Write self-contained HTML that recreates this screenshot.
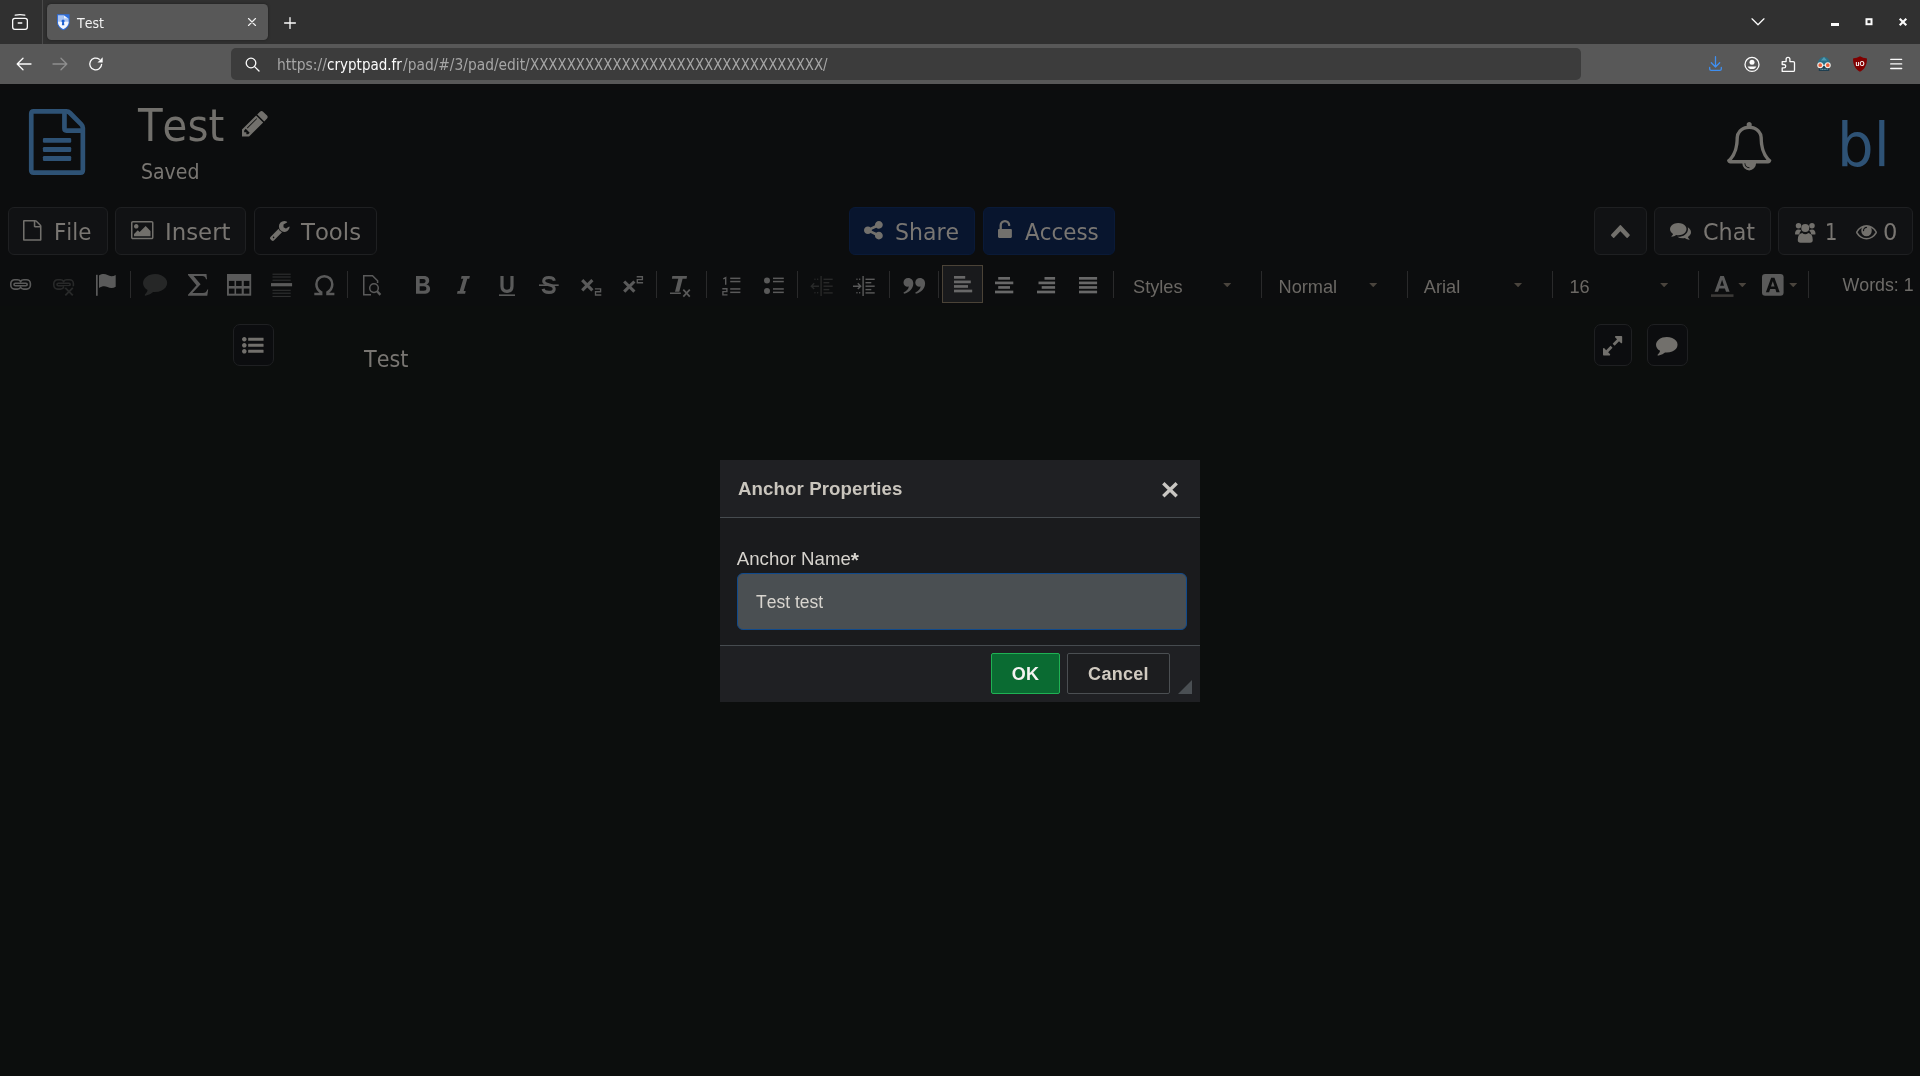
<!DOCTYPE html>
<html lang="en">
<head>
<meta charset="utf-8">
<title>Test</title>
<style>
*{box-sizing:border-box;margin:0;padding:0}
html,body{width:1920px;height:1076px;overflow:hidden;background:#0c0d0e}
body{position:relative;font-kerning:none;font-family:"DejaVu Sans Condensed","DejaVu Sans","Liberation Sans",sans-serif;color:#797672}
#root{position:absolute;left:0;top:0;width:1920px;height:1076px;will-change:transform}
.abs{position:absolute}
svg{display:block;position:absolute;overflow:visible}
/* ---------- browser chrome ---------- */
#tabstrip{left:0;top:0;width:1920px;height:44px;background:#303030}
#tabsep{left:42px;top:0;width:1px;height:44px;background:#4a4a4a}
#tab{left:47px;top:4px;width:221px;height:36px;border-radius:4.500px;background:#585858;box-shadow:0 0 3px rgba(0,0,0,.4)}
#tabtitle{left:77px;top:13px;transform-origin:0 0;transform:scaleX(.975);white-space:nowrap;font-size:14.4px;line-height:20px;color:#f4f4f4}
#navbar{left:0;top:44px;width:1920px;height:40px;background:#585858}
#navline{left:0;top:84px;width:1920px;height:1px;background:#0c0d0e}
#urlbar{left:231px;top:48px;width:1350px;height:32px;border-radius:5px;background:#3c3c3c}
#url{left:0;top:55px;font-size:15px;line-height:20px;color:#a6a6a6;white-space:nowrap}
#url b{font-weight:normal;color:#fbfbfb}
#url span,#url b{position:absolute;top:0;transform-origin:0 0}
#u1{left:276.600px;transform:scaleX(1.03)}#u2{left:327.100px}#u3{left:402.800px;transform:scaleX(1.023)}#u4{left:529.700px;transform:scaleX(.991)}
/* ---------- cryptpad header ---------- */
#title{left:137.500px;top:95.200px;transform:scaleX(1.007);font-size:44.500px;line-height:62px;color:#72706c;transform-origin:0 0;white-space:nowrap}
#saved{left:141px;top:159px;transform:scaleX(1.025);font-size:20.5px;line-height:26px;color:#797672;transform-origin:0 0;white-space:nowrap}
#avatar{left:1836.5px;top:107px;transform:scaleX(1.048);font-size:61.2px;line-height:76px;color:#2e5275;transform-origin:0 0;white-space:nowrap}
.btn{position:absolute;top:207px;height:48px;border:1px solid #1f2022;border-radius:6px;background:#111214;color:#797672;font-size:24px;line-height:46px;white-space:nowrap}
.btn.dk{background:#0d0e10}
.bt{position:absolute;top:217px;font-size:23.5px;line-height:30px;color:#797672;white-space:nowrap;transform-origin:0 0}
.btn.blue{background:#08152e;border-color:#0a1a38}
/* ---------- ck toolbar ---------- */
.sep{position:absolute;top:271px;width:1px;height:27px;background:#2a2a2b}
.combo{position:absolute;top:274.700px;font-family:"Liberation Sans",sans-serif;font-size:18.200px;line-height:24px;color:#6b6864;white-space:nowrap}
.caret{position:absolute;top:282.900px;width:8.100px;height:4.300px;background:#4a443d;clip-path:polygon(0 0,100% 0,50% 100%)}
#words{left:1842.500px;top:273px;font-family:"Liberation Sans",sans-serif;font-size:17.800px;line-height:24px;color:#6e6c69;white-space:nowrap}
#alignbox{left:942px;top:265px;width:41px;height:38px;background:#191a1c;border:1px solid #4b4337}
.sbtn{position:absolute;width:41px;height:42px;border:1px solid #1f2022;border-radius:7px;background:#0c0d0f}
#doctext{left:364px;top:344px;transform:scaleX(.98);font-size:23.5px;line-height:30px;color:#797672;transform-origin:0 0;white-space:nowrap}
/* ---------- dialog ---------- */
#dlg{left:720px;top:460px;width:480px;height:242px;background:#1f2023}
#dlgbody{left:0;top:57px;width:480px;height:129px;background:#1a1b1d}
#dlgtitle{left:18px;top:17px;letter-spacing:.1px;font-family:"Liberation Sans",sans-serif;font-weight:bold;font-size:18.67px;line-height:24px;color:#c9c5bd;white-space:nowrap}
#dlghr1{left:0;top:56.800px;width:480px;height:1.300px;background:#464b4f}
#dlghr2{left:0;top:185px;width:480px;height:1.300px;background:#464b4f}
#dlglabel{left:16.800px;top:87px;font-family:"Liberation Sans",sans-serif;font-size:18.67px;line-height:24px;color:#d6d3cd;white-space:nowrap}
#dlginput{left:17px;top:113px;width:450px;height:57px;border:1.330px solid #104a8c;border-radius:6px;background:#4a4f52}
#dlginputtext{left:36px;top:130px;font-family:"Liberation Sans",sans-serif;font-size:17.500px;line-height:24px;color:#d8d5cf;white-space:nowrap}
#ok{left:271px;top:193px;width:69px;height:41px;border:1px solid #1fb254;border-radius:2px;background:#0a6b32;color:#f4f4f2;font-family:"Liberation Sans",sans-serif;font-weight:bold;font-size:18px;line-height:40px;text-align:center;letter-spacing:.3px}
#cancel{left:347px;top:193px;width:103px;height:41px;border:1px solid #4b4f52;border-radius:2px;background:#1c1d1f;color:#d0cac0;font-family:"Liberation Sans",sans-serif;font-weight:bold;font-size:18px;line-height:40px;text-align:center;letter-spacing:.3px}
#resize{left:458px;top:220px;width:0;height:0;border-left:14px solid transparent;border-bottom:14px solid #4a4f53}
#dlglabel b{font-size:21px;line-height:10px;position:relative;top:1.500px}
</style>
</head>
<body>
<div id="root">
<!-- browser chrome -->
<div id="tabstrip" class="abs"></div>
<div id="tabsep" class="abs"></div>
<div id="tab" class="abs"></div>
<div id="tabtitle" class="abs">Test</div>
<div id="navbar" class="abs"></div>
<div id="navline" class="abs"></div>
<div id="urlbar" class="abs"></div>
<div id="url" class="abs"><span id="u1">https://</span><b id="u2">cryptpad.fr</b><span id="u3">/pad/#/3/pad/edit/</span><span id="u4">XXXXXXXXXXXXXXXXXXXXXXXXXXXXXXXX/</span></div>


<!-- chrome icons -->
<svg style="left:12px;top:14px" width="16" height="16" viewBox="0 0 16 16" fill="none" stroke="#fbfbfb" stroke-width="1.3" stroke-linecap="round"><path d="M3.2 1.1 Q8 0.2 12.8 1.1"/><rect x=".65" y="4.3" width="14.7" height="11" rx="2.2"/><path d="M6.2 9h3.6"/></svg>
<svg style="left:55.700px;top:13px" width="14.600" height="17.800" viewBox="0 0 14 17" preserveAspectRatio="none"><path d="M1 1.2h12v7.3c0 3.6-2.6 6.4-6 8-3.400-1.600-6-4.400-6-8z" fill="#2f6fdc"/><path d="M1.900 2.100h5.600v3.400h4.600v3c0 3-2.100 5.400-5.100 6.800-3-1.400-5.100-3.800-5.100-6.800z" fill="#a9c4f3"/><path d="M7.500 2.100l4.600 3.400h-4.600z" fill="#e9f0fc"/><path d="M1.900 8.300h10.200c0 3.200-2.100 5.600-5.100 7-3-1.400-5.100-3.800-5.100-7z" fill="#f4f7fd"/><circle cx="6.800" cy="7.600" r="1.500" fill="#1c5fd0"/><path d="M6.100 8h1.400l.5 3.600h-2.400z" fill="#1c5fd0"/></svg>
<svg style="left:248px;top:18px" width="8" height="8" viewBox="0 0 8 8" fill="none" stroke="#f0f0f0" stroke-width="1.150" stroke-linecap="round"><path d="M.5.500l7 7M7.500.500l-7 7"/></svg>
<svg style="left:283.500px;top:16.500px" width="12" height="12" viewBox="0 0 12 12" fill="none" stroke="#fbfbfb" stroke-width="1.300" stroke-linecap="round"><path d="M6 .600v10.800M.600 6h10.800"/></svg>
<svg style="left:1751px;top:18px" width="14" height="8" viewBox="0 0 14 8" fill="none" stroke="#fbfbfb" stroke-width="1.250" stroke-linecap="round" stroke-linejoin="round"><path d="M1 .800l6 6 6-6"/></svg>
<div class="abs" style="left:1831px;top:23px;width:8px;height:3px;background:#fbfbfb"></div>
<svg style="left:1865px;top:18px" width="8" height="8" viewBox="0 0 8 8"><rect x="1.500" y="1.200" width="5" height="5" fill="none" stroke="#fbfbfb" stroke-width="2"/></svg>
<svg style="left:1899px;top:18px" width="8" height="8" viewBox="0 0 8 8" fill="none" stroke="#fbfbfb" stroke-width="2.100"><path d="M.700.700l6.600 6.600M7.300.700l-6.600 6.600"/></svg>
<!-- nav icons -->
<svg style="left:16px;top:57px" width="16" height="14" viewBox="0 0 16 14" fill="none" stroke="#fbfbfb" stroke-width="1.300" stroke-linecap="round" stroke-linejoin="round"><path d="M15 7H1.500M7 1.200L1.200 7 7 12.800"/></svg>
<svg style="left:52px;top:57px" width="16" height="14" viewBox="0 0 16 14" fill="none" stroke="#8f8f8f" stroke-width="1.300" stroke-linecap="round" stroke-linejoin="round"><path d="M1 7h13.500M9 1.200L14.800 7 9 12.800"/></svg>
<svg style="left:88px;top:56px" width="16" height="16" viewBox="0 0 16 16"><path d="M13.600 8.400a5.900 5.900 0 1 1-2.300-5.100" fill="none" stroke="#fbfbfb" stroke-width="1.300" stroke-linecap="round"/><path d="M14.700 1.200v5.200h-5.200z" fill="#fbfbfb"/></svg>
<svg style="left:245px;top:57px" width="15" height="15" viewBox="0 0 15 15" fill="none" stroke="#fbfbfb" stroke-width="1.300" stroke-linecap="round"><circle cx="6" cy="6" r="4.800"/><path d="M9.600 9.600l4.400 4.400"/></svg>
<svg style="left:1708px;top:56px" width="15" height="15" viewBox="0 0 15 15" fill="none" stroke="#3f8ff0" stroke-width="1.300" stroke-linecap="round" stroke-linejoin="round"><path d="M7.500.700v10.300M3.300 6.800l4.200 4.200 4.200-4.200M1.700 11.500v1.400q0 1.400 1.400 1.400h8.800q1.400 0 1.400-1.400v-1.400"/></svg>
<svg style="left:1744px;top:56px" width="16" height="16" viewBox="0 0 16 16"><circle cx="8" cy="8.400" r="7" fill="none" stroke="#fbfbfb" stroke-width="1.300"/><circle cx="8" cy="6.300" r="2.500" fill="#fbfbfb"/><path d="M3.600 10.400h8.800a4.600 3.600 0 0 1-8.800 0z" fill="#fbfbfb"/></svg>
<svg style="left:1781px;top:56px" width="15" height="16" viewBox="0 0 15 16" fill="none" stroke="#fbfbfb" stroke-width="1.300" stroke-linejoin="round"><path d="M1.200 5.600h3.900v-2.400a1.900 1.900 0 0 1 3.800 0v2.400h3.400q1.200 0 1.200 1.200v7.400q0 1.200-1.200 1.200h-11.100v-3.500h1.800a1.700 1.700 0 0 0 0-3.400h-1.800z"/></svg>
<svg style="left:1815px;top:56px" width="18" height="16" viewBox="0 0 18 16"><path d="M2.600 9.500c0-5.500 2.700-8.500 6.400-8.500s6.400 3 6.400 8.500v1.500h-12.800z" fill="#2b6f86"/><path d="M3.800 10.500h10.400v4.500h-10.400z" fill="#1f3f50"/><path d="M5.500 13.300h7" stroke="#7fb4c4" stroke-width="1" stroke-dasharray="1 .6"/><path d="M9 1l3 3.500h-6z" fill="#4f9bb3"/><circle cx="5.200" cy="9.200" r="2.400" fill="#e8603c" stroke="#f3efe9" stroke-width="1.100"/><circle cx="12.800" cy="9.200" r="2.400" fill="#e8603c" stroke="#f3efe9" stroke-width="1.100"/><path d="M7.600 9.200h2.800" stroke="#f3efe9" stroke-width="1"/></svg>
<svg style="left:1852px;top:56px" width="16" height="16" viewBox="0 0 16 16"><path d="M8 .300c2 1.300 4.300 1.900 7 2.100 0 6.400-2.300 10.700-7 13.300-4.700-2.600-7-6.900-7-13.300 2.700-.200 5-.800 7-2.100z" fill="#800000"/><text x="8" y="10" font-family="'Liberation Sans',sans-serif" font-size="6.500" font-weight="bold" fill="#fff" text-anchor="middle">uO</text></svg>
<svg style="left:1889px;top:58px" width="14" height="12" viewBox="0 0 14 12" fill="none" stroke="#fbfbfb" stroke-width="1.300" stroke-linecap="round"><path d="M1.700 1.300h11M1.700 5.900h11M1.700 10.500h11"/></svg>

<div class="abs" style="left:0;top:306px;width:1920px;height:770px;background:#0c0e0d"></div>
<!-- cryptpad header -->
<div id="title" class="abs">Test</div>
<div id="saved" class="abs">Saved</div>
<div id="avatar" class="abs">bl</div>

<div class="btn" style="left:8px;width:100px"></div>
<div class="btn" style="left:115px;width:131px"></div>
<div class="btn dk" style="left:254px;width:123px"></div>
<div class="btn blue" style="left:849px;width:126px"></div>
<div class="btn blue" style="left:983px;width:132px"></div>
<div class="btn" style="left:1594px;width:53px"></div>
<div class="btn" style="left:1654px;width:117px"></div>
<div class="btn" style="left:1778px;width:135px"></div>
<div id="tFile" class="bt" style="left:53.8px;transform:scaleX(1.015)">File</div>
<div id="tInsert" class="bt" style="left:165.2px;transform:scaleX(1.08)">Insert</div>
<div id="tTools" class="bt" style="left:301.2px;transform:scaleX(1.078)">Tools</div>
<div id="tShare" class="bt" style="left:894.5px;transform:scaleX(1.042)">Share</div>
<div id="tAccess" class="bt" style="left:1024.6px;transform:scaleX(1.014)">Access</div>
<div id="tChat" class="bt" style="left:1703.3px;transform:scaleX(1.054)">Chat</div>
<div id="tOne" class="bt" style="left:1824.5px;transform:scaleX(.92)">1</div>
<div id="tZero" class="bt" style="left:1882.7px;transform:scaleX(1.07)">0</div>

<div class="sbtn" style="left:233px;top:324px"></div>
<div class="sbtn" style="left:1594px;top:324px;width:38px"></div>
<div class="sbtn" style="left:1647px;top:324px"></div>
<div id="doctext" class="abs">Test</div>

<!-- cryptpad icons -->
<svg style="left:28px;top:108px" width="58" height="68" viewBox="0 0 58 68" fill="none" stroke="#2e5275" stroke-width="4.7" stroke-linejoin="round"><path d="M3.250 5.800Q3.250 3.450 5.600 3.450H38.500Q40.500 3.450 42 5L53.300 16.300Q54.850 17.900 54.850 20V62.300Q54.850 64.650 52.500 64.650H5.600Q3.250 64.650 3.250 62.300Z"/><path d="M36.450 3.450V20.600Q36.450 22.600 38.450 22.600H54.850"/><g fill="#2e5275" stroke="none"><rect x="14.900" y="29.900" width="28.300" height="4.900" rx="1.200"/><rect x="14.900" y="39" width="28.300" height="4.900" rx="1.200"/><rect x="14.900" y="48.100" width="28.300" height="4.900" rx="1.200"/></g></svg>
<svg style="left:241.9px;top:110.7px" width="25.7" height="25.5" viewBox="128 149 1515 1515" preserveAspectRatio="none"><path d="M491 1536l91-91-235-235-91 91v107h128v128h107zm523-928q0-22-22-22-10 0-17 7l-542 542q-7 7-7 17 0 22 22 22 10 0 17-7l542-542q7-7 7-17zm-54-192l416 416-832 832h-416v-416zm683 96q0 53-37 90l-166 166-416-416 166-165q36-38 90-38 53 0 91 38l235 234q37 39 37 91z" fill="#72706c"/></svg>
<svg style="left:1726.9px;top:121.7px" width="44.4" height="48.4" viewBox="64 0 1664 1792" preserveAspectRatio="none"><path d="M912 1696q0-16-16-16-59 0-101.500-42.500t-42.500-101.500q0-16-16-16t-16 16q0 73 51.500 124.500t124.500 51.500q16 0 16-16zm-666-288h1300q-266-300-266-832 0-51-24-105t-69-103-121.500-80.500-169.500-31.500-169.500 31.500-121.500 80.500-69 103-24 105q0 532-266 832zm1482 0q0 52-38 90t-90 38h-448q0 106-75 181t-181 75-181-75-75-181h-448q-52 0-90-38t-38-90q50-42 91-88t85-119.500 74.500-158.500 50-206 19.500-260q0-152 117-282.500t307-158.500q-8-19-8-39 0-40 28-68t68-28 68 28 28 68q0 20-8 39 190 28 307 158.500t117 282.500q0 139 19.500 260t50 206 74.500 158.500 85 119.500 91 88z" fill="#72706c"/></svg>
<svg style="left:23.3px;top:220px" width="18.5" height="20.8" viewBox="128 0 1536 1792" preserveAspectRatio="none"><path d="M1596 380q28 28 48 76t20 88v1152q0 40-28 68t-68 28h-1344q-40 0-68-28t-28-68v-1600q0-40 28-68t68-28h896q40 0 88 20t76 48zm-444-244v376h376q-10-29-22-41l-313-313q-12-12-41-22zm384 1528v-1024h-416q-40 0-68-28t-28-68v-416h-768v1536h1280z" fill="#72706c"/></svg>
<svg style="left:130.9px;top:221.3px" width="22.5" height="18.3" viewBox="-64 128 1920 1536" preserveAspectRatio="none"><path d="M576 576q0 80-56 136t-136 56-136-56-56-136 56-136 136-56 136 56 56 136zm1024 384v448h-1408v-192l320-320 160 160 512-512zm96-704h-1600q-13 0-22.500 9.500t-9.500 22.500v1216q0 13 9.500 22.500t22.500 9.500h1600q13 0 22.500-9.500t9.500-22.500v-1216q0-13-9.500-22.500t-22.500-9.500zm160 32v1216q0 66-47 113t-113 47h-1600q-66 0-113-47t-47-113v-1216q0-66 47-113t113-47h1600q66 0 113 47t47 113z" fill="#72706c"/></svg>
<svg style="left:269.8px;top:221.3px" width="19.6" height="20" viewBox="85 128 1641 1643" preserveAspectRatio="none"><path d="M448 1472q0-26-19-45t-45-19-45 19-19 45 19 45 45 19 45-19 19-45zm644-420l-682 682q-37 37-90 37-52 0-91-37l-106-108q-38-36-38-90 0-53 38-91l681-681q39 98 114.500 173.500t173.500 114.500zm634-435q0 39-23 106-47 134-164.500 217.500t-258.500 83.500q-185 0-316.500-131.500t-131.500-316.500 131.500-316.500 316.500-131.500q58 0 121.500 16.500t107.500 46.500q16 11 16 28t-16 28l-293 169v224l193 107q5-3 79-48.500t135.500-81 70.500-35.500q15 0 23.500 10t8.500 25z" fill="#72706c"/></svg>
<svg style="left:864.2px;top:221.1px" width="18.8" height="18.5" viewBox="128 128 1536 1536" preserveAspectRatio="none"><path d="M1344 1024q133 0 226.500 93.500t93.500 226.500-93.500 226.500-226.500 93.500-226.500-93.500-93.500-226.500q0-12 2-34l-360-180q-92 86-218 86-133 0-226.500-93.500t-93.500-226.500 93.500-226.500 226.500-93.500q126 0 218 86l360-180q-2-22-2-34 0-133 93.500-226.500t226.500-93.500 226.500 93.500 93.500 226.500-93.500 226.500-226.500 93.500q-126 0-218-86l-360 180q2 22 2 34t-2 34l360 180q92-86 218-86z" fill="#72706c"/></svg>
<svg style="left:998.3px;top:219.9px" width="13.9" height="17.9" viewBox="320 0 1152 1536" preserveAspectRatio="none"><path d="M1376 768q40 0 68 28t28 68v576q0 40-28 68t-68 28h-960q-40 0-68-28t-28-68v-576q0-40 28-68t68-28h32v-320q0-185 131.500-316.500t316.500-131.500 316.500 131.500 131.500 316.500q0 26-19 45t-45 19h-64q-26 0-45-19t-19-45q0-106-75-181t-181-75-181 75-75 181v320h736z" fill="#72706c"/></svg>
<svg style="left:1611px;top:225.4px" width="18.8" height="13.1" viewBox="90 480 1612 1035" preserveAspectRatio="none"><path d="M1683 1331l-166 165q-19 19-45 19t-45-19l-531-531-531 531q-19 19-45 19t-45-19l-166-165q-19-19-19-45.500t19-45.500l742-741q19-19 45-19t45 19l742 741q19 19 19 45.500t-19 45.500z" fill="#72706c"/></svg>
<svg style="left:1670.3px;top:222.8px" width="21" height="16.8" viewBox="0 256 1792 1408.11" preserveAspectRatio="none"><path d="M1408 768q0 139-94 257t-256.500 186.500-353.500 68.500q-86 0-176-16-124 88-278 128-36 9-86 16h-3q-11 0-20.500-8t-11.500-21q-1-3-1-6.500t.5-6.500 2-6l2.500-5 3.500-5.500 4-5 4.500-5 4-4.500q5-6 23-25t26-29.500 22.500-29 25-38.500 20.500-44q-124-72-195-177t-71-224q0-139 94-257t256.500-186.500 353.500-68.500 353.500 68.500 256.500 186.500 94 257zm384 256q0 120-71 224.500t-195 176.500q10 24 20.500 44t25 38.500 22.500 29 26 29.500 23 25q1 1 4 4.500t4.500 5 4 5 3.500 5.500l2.500 5 2 6 .5 6.500-1 6.500q-3 14-13 22t-22 7q-50-7-86-16-154-40-278-128-90 16-176 16-271 0-472-132 58 4 88 4 161 0 309-45t264-129q125-92 192-212t67-254q0-77-23-152 129 71 204 178t75 230z" fill="#72706c"/></svg>
<svg style="left:1855.9px;top:225.4px" width="21" height="14.6" viewBox="0 384 1792 1152" preserveAspectRatio="none"><path d="M1664 960q-152-236-381-353 61 104 61 225 0 185-131.500 316.500t-316.500 131.500-316.500-131.500-131.500-316.500q0-121 61-225-229 117-381 353 133 205 333.500 326.500t434.500 121.500 434.500-121.500 333.500-326.500zm-720-384q0-20-14-34t-34-14q-125 0-214.500 89.500t-89.500 214.500q0 20 14 34t34 14 34-14 14-34q0-86 61-147t147-61q20 0 34-14t14-34zm848 384q0 34-20 69-140 230-376.500 368.500t-499.500 138.500-499.500-139-376.500-368q-20-35-20-69t20-69q140-229 376.500-368t499.500-139 499.500 139 376.500 368q20 35 20 69z" fill="#72706c"/></svg>
<svg style="left:1794.4px;top:221.8px" width="22.500" height="21" viewBox="0 0 45 42" fill="#72706c"><circle cx="9" cy="7.500" r="5.500"/><circle cx="36" cy="7.500" r="5.500"/><path d="M2 24q0-9 7-9 3.500 0 5.500 2-3.500 3-4 8h-6q-2.500 0-2.500-1z"/><path d="M43 24q0-9-7-9-3.500 0-5.500 2 3.500 3 4 8h6q2.500 0 2.500-1z"/><circle cx="22.500" cy="12" r="8"/><path d="M7.500 36q0-13 9-14 2.500 2.500 6 2.500t6-2.500q9 1 9 14 0 5.500-5.500 5.500h-19q-5.500 0-5.500-5.500z"/></svg>
<svg style="left:242.2px;top:337.3px" width="21.55" height="16.6" viewBox="0 192 1792 1408" preserveAspectRatio="none"><path d="M384 1408q0 80-56 136t-136 56-136-56-56-136 56-136 136-56 136 56 56 136zm0-512q0 80-56 136t-136 56-136-56-56-136 56-136 136-56 136 56 56 136zm1408 416v192q0 13-9.500 22.500t-22.500 9.500h-1216q-13 0-22.500-9.500t-9.500-22.500v-192q0-13 9.500-22.500t22.500-9.500h1216q13 0 22.500 9.500t9.500 22.500zm-1408-928q0 80-56 136t-136 56-136-56-56-136 56-136 136-56 136 56 56 136zm1408 416v192q0 13-9.500 22.500t-22.500 9.500h-1216q-13 0-22.500-9.500t-9.500-22.500v-192q0-13 9.500-22.500t22.500-9.500h1216q13 0 22.500 9.500t9.500 22.500zm0-512v192q0 13-9.500 22.500t-22.500 9.500h-1216q-13 0-22.500-9.500t-9.500-22.500v-192q0-13 9.500-22.500t22.500-9.500h1216q13 0 22.500 9.500t9.500 22.500z" fill="#72706c"/></svg>
<svg style="left:1602.8px;top:335.8px" width="19.2" height="19.4" viewBox="128 128 1536 1536" preserveAspectRatio="none"><path d="M883 1056q0 13-10 23l-332 332 144 144q19 19 19 45t-19 45-45 19h-448q-26 0-45-19t-19-45v-448q0-26 19-45t45-19 45 19l144 144 332-332q10-10 23-10t23 10l114 114q10 10 10 23zm781-864v448q0 26-19 45t-45 19-45-19l-144-144-332 332q-10 10-23 10t-23-10l-114-114q-10-10-10-23t10-23l332-332-144-144q-19-19-19-45t19-45 45-19h448q26 0 45 19t19 45z" fill="#72706c"/></svg>
<svg style="left:1656.25px;top:336.6px" width="21.55" height="18.6" viewBox="0 256 1792 1536.31" preserveAspectRatio="none"><path d="M1792 896q0 174-120 321.500t-326 233-450 85.500q-70 0-145-8-198 175-460 242-49 14-114 22-17 2-30.500-9t-17.500-29v-1q-3-4-.5-12t2-10 4.500-9.500l6-9 7-8.500 8-9q7-8 31-34.500t34.500-38 31-39.500 32.500-51 27-59 26-76q-157-89-247.500-220t-90.500-281q0-130 71-248.500t191-204.500 286-136.500 348-50.500q244 0 450 85.500t326 233 120 321.500z" fill="#72706c"/></svg>


<!-- ck toolbar -->
<svg style="left:10.4px;top:278.9px" width="21.1" height="10.9" viewBox="0 0 21.1 10.9"><g fill="none" stroke="#5a5a5a" stroke-width="1.600"><path d="M4.600 .800H7.500Q9.600 .800 10.600 2.500Q11.600 .800 13.700 .800H16.600A3.800 3.800 0 0 1 20.400 4.600V6.300A3.800 3.800 0 0 1 16.600 10.100H13.700Q11.600 10.100 10.600 8.400Q9.600 10.100 7.500 10.100H4.600A3.800 3.800 0 0 1 .800 6.300V4.600A3.800 3.800 0 0 1 4.600 .800Z"/><rect x="4" y="4.200" width="13.200" height="2.500" rx="1.250"/></g></svg>
<svg style="left:52.9px;top:279px" width="20.6" height="16.8" viewBox="0 0 20.6 16.8"><g fill="none" stroke="#282929" stroke-width="1.600"><path d="M4.600 .800H7.500Q9.600 .800 10.600 2.500Q11.600 .800 13.700 .800H16.600A3.800 3.800 0 0 1 20.400 4.600V6.300A3.800 3.800 0 0 1 16.600 10.100H13.700Q11.600 10.100 10.600 8.400Q9.600 10.100 7.500 10.100H4.600A3.800 3.800 0 0 1 .800 6.300V4.600A3.800 3.800 0 0 1 4.600 .800Z"/><rect x="4" y="4.200" width="13.200" height="2.500" rx="1.250"/></g><rect x="11.300" y="7.300" width="10" height="10" fill="#0c0d0e"/><path d="M12.300 8.900l7.500 7.500M19.800 8.900l-7.500 7.500" stroke="#282929" stroke-width="1.800" fill="none"/></svg>
<svg style="left:96px;top:274px" width="19.7" height="21.8" viewBox="0 0 19.7 21.8"><rect x="0" y=".8" width="1.7" height="21" fill="#5a5a5a"/><path d="M3 1.600C6-.3 9-.3 11.500 1.100S17 2.600 19.700.900V12.800C17 14.600 14 14.300 11.500 13S6 11.900 3 13.900Z" fill="#5a5a5a"/></svg>
<div class="sep" style="left:130px"></div>
<svg style="left:142.800px;top:274.100px" width="24.200" height="21.700" viewBox="0 256 1792 1536.31" preserveAspectRatio="none"><path d="M1792 896q0 174-120 321.500t-326 233-450 85.500q-70 0-145-8-198 175-460 242-49 14-114 22-17 2-30.500-9t-17.500-29v-1q-3-4-.5-12t2-10 4.500-9.500l6-9 7-8.500 8-9q7-8 31-34.500t34.500-38 31-39.500 32.500-51 27-59 26-76q-157-89-247.500-220t-90.500-281q0-130 71-248.500t191-204.500 286-136.500 348-50.500q244 0 450 85.500t326 233 120 321.500z" fill="#262727"/></svg>
<svg style="left:187.8px;top:274.1px" width="20.2" height="21.7" viewBox="0 0 20.2 21.7"><path d="M0 0H18.500L19 5.200H18Q17.400 1.900 14.300 1.900H5.600L12.600 10.300 4.400 19H15Q18.400 19 19.300 15.400H20.200L19.300 21.700H0V20.700L8.500 11.300 0 .900Z" fill="#5a5a5a"/></svg>
<svg style="left:226.9px;top:274.1px" width="24.2" height="21.7" viewBox="0 0 24.2 21.7"><rect x="0" y="0" width="24.2" height="21.7" fill="#5a5a5a"/><rect x="1.9" y="6.9" width="5.6" height="5.1" fill="#0c0d0e"/><rect x="9.1" y="6.9" width="5.6" height="5.1" fill="#0c0d0e"/><rect x="16.8" y="6.9" width="5.6" height="5.1" fill="#0c0d0e"/><rect x="1.9" y="14.6" width="5.6" height="5.1" fill="#0c0d0e"/><rect x="9.1" y="14.6" width="5.6" height="5.1" fill="#0c0d0e"/><rect x="16.8" y="14.6" width="5.6" height="5.1" fill="#0c0d0e"/></svg>
<svg style="left:270.6px;top:273.3px" width="21.1" height="23.6" viewBox="0 0 21.1 23.6"><rect x="1.5" y="0.7" width="18.2" height="1" fill="#333434"/><rect x="1.5" y="3.5" width="18.2" height="1" fill="#333434"/><rect x="1.5" y="6.7" width="18.2" height="1" fill="#333434"/><rect x="1.5" y="16.8" width="18.2" height="1" fill="#333434"/><rect x="1.5" y="19.7" width="18.2" height="1" fill="#333434"/><rect x="1.5" y="22.9" width="18.2" height="1" fill="#333434"/><rect x="0" y="10.1" width="21.1" height="3.2" fill="#5a5a5a"/></svg>
<svg style="left:313.5px;top:275.4px" width="20.7" height="20.4" viewBox="0 0 20.7 20.4"><path d="M.3 19.100H7.200V17.300C3.700 15.300 2.400 12.400 2.400 9.300C2.400 4.500 5.800 1.300 10.350 1.300S18.300 4.500 18.300 9.300C18.300 12.400 17 15.300 13.500 17.300V19.100H20.400" fill="none" stroke="#5a5a5a" stroke-width="2.500"/></svg>
<div class="sep" style="left:347.3px"></div>
<svg style="left:362.8px;top:274.9px" width="17.8" height="20.6" viewBox="0 0 17.8 20.6"><g fill="none" stroke="#5a5a5a" stroke-width="1.500"><path d="M8 19.850H.750V.750H9.500L14.600 5.800V8"/><circle cx="11" cy="13.100" r="4.300"/><path d="M14.100 16.300L17.400 19.900" stroke-width="2.300"/></g></svg>
<svg style="left:415.8px;top:275.8px" width="14.1" height="17.8" viewBox="0 0 14.1 17.8"><path fill-rule="evenodd" fill="#5a5a5a" d="M0 0H8C11.800 0 13.200 2.200 13.200 4.600C13.200 6.700 12.100 8 10.300 8.600C12.700 9 14.100 10.600 14.100 12.900C14.100 16 11.800 17.800 8 17.800H0ZM3.700 3V7.300H7.300C9 7.300 9.600 6.300 9.600 5.100C9.600 3.700 8.800 3 7.300 3ZM3.700 10.200V14.800H7.800C9.700 14.800 10.400 13.800 10.400 12.500C10.400 11 9.500 10.200 7.800 10.200Z"/></svg>
<svg style="left:456.6px;top:275.8px" width="12.9" height="17.8" viewBox="0 0 12.9 17.8"><path fill="#5a5a5a" d="M4.600 0H12.900L12.300 2.800H10.300L6.700 15H8.700L8.100 17.800H0L.600 15H2.700L6.300 2.800H4Z"/></svg>
<svg style="left:498.8px;top:275.8px" width="16" height="20.2" viewBox="0 0 16 20.2"><path d="M3 0V10.300C3 13.800 4.800 15.300 8 15.300S13 13.800 13 10.300V0" fill="none" stroke="#5a5a5a" stroke-width="3.200"/><rect x="0" y="18.4" width="16" height="1.6" fill="#5a5a5a"/></svg>
<svg style="left:539.2px;top:275.8px" width="19.7" height="18" viewBox="0 0 19.7 18"><path d="M15.300 4.700C14.800 2.300 13 1.500 9.900 1.500C6.700 1.500 4.700 2.700 4.700 5C4.700 7.400 7 8 9.900 8.800C12.900 9.500 15.200 10.300 15.200 12.900C15.200 15.300 13.100 16.400 9.900 16.400C6.600 16.400 4.600 15.300 4.100 12.900" fill="none" stroke="#5a5a5a" stroke-width="3.100"/><rect x="0" y="8.4" width="19.7" height="1.6" fill="#5a5a5a"/></svg>
<svg style="left:580.7px;top:278.9px" width="20.5" height="16.8" viewBox="0 0 20.5 16.8"><path d="M1.200 1.200L11.400 11.400M11.400 1.200L1.200 11.400" fill="none" stroke="#5a5a5a" stroke-width="3.100"/><path d="M13.900 9.900H19.600V12.800H14.500V16H20.300" fill="none" stroke="#5a5a5a" stroke-width="1.350"/></svg>
<svg style="left:622.6px;top:276px" width="20.4" height="16.8" viewBox="0 0 20.4 16.8"><path d="M1.200 5.500L11.400 15.700M11.400 5.500L1.200 15.700" fill="none" stroke="#5a5a5a" stroke-width="3.100"/><path d="M13.700 .700H19.400V3.600H14.300V6.800H20.100" fill="none" stroke="#5a5a5a" stroke-width="1.350"/></svg>
<div class="sep" style="left:656.3px"></div>
<svg style="left:670.2px;top:275.8px" width="20.4" height="21.2" viewBox="0 0 20.4 21.2"><path fill="#5a5a5a" d="M2.300 0H17L16.600 2.800H12.600L9.300 15.700H5L8.300 2.800H1.900Z"/><rect x="0" y="16.5" width="10.8" height="1.5" fill="#5a5a5a"/><path d="M13.300 13.700L19.800 20.600M19.800 13.700L13.300 20.600" fill="none" stroke="#5a5a5a" stroke-width="1.700"/></svg>
<div class="sep" style="left:706px"></div>
<svg style="left:721.8px;top:277.2px" width="18.4" height="18.8" viewBox="0 0 18.4 18.8"><path d="M1.300 1.900L3.700.700V7.800" fill="none" stroke="#5a5a5a" stroke-width="1.400"/><path d="M.300 11.800H4.900V14.700H.900V17.900H5.500" fill="none" stroke="#5a5a5a" stroke-width="1.350"/><rect x="8.2" y="0.6" width="10.2" height="1.5" fill="#5a5a5a"/><rect x="8.2" y="3.8" width="10.2" height="1.5" fill="#5a5a5a"/><rect x="8.2" y="11.2" width="10.2" height="1.5" fill="#5a5a5a"/><rect x="8.2" y="14.6" width="10.2" height="1.5" fill="#5a5a5a"/></svg>
<svg style="left:764px;top:277.2px" width="19.8" height="18.8" viewBox="0 0 19.8 18.8"><circle cx="3" cy="3.600" r="3" fill="#5a5a5a"/><circle cx="3" cy="13.900" r="3" fill="#5a5a5a"/><rect x="9" y="0.6" width="10.8" height="1.5" fill="#5a5a5a"/><rect x="9" y="3.8" width="10.8" height="1.5" fill="#5a5a5a"/><rect x="9" y="11.2" width="10.8" height="1.5" fill="#5a5a5a"/><rect x="9" y="14.6" width="10.8" height="1.5" fill="#5a5a5a"/></svg>
<div class="sep" style="left:797.2px"></div>
<svg style="left:811px;top:275.8px" width="21.8" height="20" viewBox="0 0 21.8 20"><rect x="9.4" y="0" width="1.4" height="20" fill="#282929"/><rect x="12.5" y="2.6" width="9.2" height="1.4" fill="#282929"/><rect x="12.5" y="6" width="5.8" height="1.4" fill="#282929"/><rect x="12.5" y="9.5" width="9.2" height="1.4" fill="#282929"/><rect x="12.5" y="12.9" width="5.8" height="1.4" fill="#282929"/><rect x="12.5" y="16.2" width="9.2" height="1.4" fill="#282929"/><rect x="3.3" y="2.6" width="1.3" height="1.3" fill="#282929"/><rect x="6" y="2.6" width="1.3" height="1.3" fill="#282929"/><rect x="3.3" y="16.1" width="1.3" height="1.3" fill="#282929"/><rect x="6" y="16.1" width="1.3" height="1.3" fill="#282929"/><path d="M.300 10.200H8M3.200 7.300L.300 10.200 3.200 13.100" fill="none" stroke="#282929" stroke-width="1.400"/></svg>
<svg style="left:853px;top:275.8px" width="21.8" height="20" viewBox="0 0 21.8 20"><rect x="9.4" y="0" width="1.4" height="20" fill="#5a5a5a"/><rect x="12.5" y="2.6" width="9.2" height="1.4" fill="#5a5a5a"/><rect x="12.5" y="6" width="5.8" height="1.4" fill="#5a5a5a"/><rect x="12.5" y="9.5" width="9.2" height="1.4" fill="#5a5a5a"/><rect x="12.5" y="12.9" width="5.8" height="1.4" fill="#5a5a5a"/><rect x="12.5" y="16.2" width="9.2" height="1.4" fill="#5a5a5a"/><rect x="3.3" y="2.6" width="1.3" height="1.3" fill="#5a5a5a"/><rect x="6" y="2.6" width="1.3" height="1.3" fill="#5a5a5a"/><rect x="3.3" y="16.1" width="1.3" height="1.3" fill="#5a5a5a"/><rect x="6" y="16.1" width="1.3" height="1.3" fill="#5a5a5a"/><path d="M0 10.200H7.500M4.800 7.300L7.700 10.200 4.800 13.100" fill="none" stroke="#5a5a5a" stroke-width="1.400"/></svg>
<div class="sep" style="left:888.6px"></div>
<svg style="left:903px;top:277.8px" width="22.2" height="15.8" viewBox="0 0 22.2 15.8"><path d="M5.200 0C8.300 0 10.300 2.300 10.300 5.500C10.300 10.500 6.500 14.500 1 15.800L.500 14.600C3.800 13 5.600 11 5.800 8.600C5.500 8.700 5.200 8.700 4.800 8.700C2.200 8.700 .500 6.900 .500 4.500C.500 1.900 2.500 0 5.200 0Z" fill="#5a5a5a"/><path d="M5.200 0C8.300 0 10.300 2.300 10.300 5.500C10.300 10.500 6.500 14.500 1 15.800L.500 14.600C3.800 13 5.600 11 5.800 8.600C5.500 8.700 5.200 8.700 4.800 8.700C2.200 8.700 .500 6.900 .500 4.500C.500 1.900 2.500 0 5.200 0Z" fill="#5a5a5a" transform="translate(11.800 0)"/></svg>
<div class="sep" style="left:938.1px"></div>
<div id="alignbox" class="abs"></div>
<svg style="left:953.7px;top:276.4px" width="18.3" height="16.4" viewBox="0 0 18.3 16.4"><rect x="0" y="0" width="11.2" height="2.7" fill="#686868"/><rect x="0" y="4.55" width="16.8" height="2.7" fill="#686868"/><rect x="0" y="9.1" width="14" height="2.7" fill="#686868"/><rect x="0" y="13.65" width="18.2" height="2.7" fill="#686868"/></svg>
<svg style="left:995px;top:277.4px" width="18.3" height="16.4" viewBox="0 0 18.3 16.4"><rect x="3.2" y="0" width="11.8" height="2.7" fill="#686868"/><rect x="0" y="4.55" width="18.3" height="2.7" fill="#686868"/><rect x="3.2" y="9.1" width="11.8" height="2.7" fill="#686868"/><rect x="0" y="13.65" width="18.3" height="2.7" fill="#686868"/></svg>
<svg style="left:1037px;top:277.4px" width="18.3" height="16.4" viewBox="0 0 18.3 16.4"><rect x="7.5" y="0" width="10.6" height="2.7" fill="#686868"/><rect x="1.5" y="4.55" width="16.6" height="2.7" fill="#686868"/><rect x="4.7" y="9.1" width="13.4" height="2.7" fill="#686868"/><rect x="0" y="13.65" width="18.1" height="2.7" fill="#686868"/></svg>
<svg style="left:1079px;top:277.4px" width="18.3" height="16.4" viewBox="0 0 18.3 16.4"><rect x="0" y="0" width="18.1" height="2.7" fill="#686868"/><rect x="0" y="4.55" width="18.1" height="2.7" fill="#686868"/><rect x="0" y="9.1" width="18.1" height="2.7" fill="#686868"/><rect x="0" y="13.65" width="18.1" height="2.7" fill="#686868"/></svg>
<div class="sep" style="left:1113.1px"></div>
<div id="cStyles" class="combo" style="left:1133px">Styles</div>
<div id="cNormal" class="combo" style="left:1278.5px">Normal</div>
<div id="cArial" class="combo" style="left:1423.8px">Arial</div>
<div id="cSize" class="combo" style="left:1569.5px">16</div>
<div class="caret" style="left:1223.2px"></div>
<div class="caret" style="left:1369.2px"></div>
<div class="caret" style="left:1514px"></div>
<div class="caret" style="left:1660.1px"></div>
<div class="caret" style="left:1738.3px"></div>
<div class="caret" style="left:1789.2px"></div>
<div class="sep" style="left:1261.3px"></div>
<div class="sep" style="left:1407.1px"></div>
<div class="sep" style="left:1552.4px"></div>
<div class="sep" style="left:1698.2px"></div>
<div class="sep" style="left:1808.2px"></div>
<svg style="left:1710.5px;top:275.8px" width="22.5" height="21" viewBox="0 0 22.5 21"><path d="M5.700 0H9.300L15 15.700H11.400L10.300 12.400H4.600L3.500 15.700H0ZM5.500 9.700H9.400L7.500 3.800Z" fill="#5a5a5a" fill-rule="evenodd" transform="translate(3.600 0)"/><rect x="0" y="18.3" width="22.5" height="2.6" fill="#3b3937"/></svg>
<svg style="left:1762.1px;top:274px" width="21.6" height="21.8" viewBox="0 0 21.6 21.8"><rect x="0" y="0" width="21.6" height="21.8" fill="#5a5a5a" rx="3.2"/><path d="M5.700 0H9.300L15 15.700H11.400L10.300 12.400H4.600L3.500 15.700H0ZM5.500 9.700H9.400L7.500 3.800Z" fill="#0c0d0e" fill-rule="evenodd" transform="translate(3.900 3.700) scale(.92)"/></svg>
<div id="words" class="abs">Words: 1</div>
<!-- /ck toolbar -->

<!-- dialog -->
<div id="dlg" class="abs">
  <div id="dlgbody" class="abs"></div>
  <div id="dlgtitle" class="abs">Anchor Properties</div>
  <div id="dlghr1" class="abs"></div>
  <div id="dlglabel" class="abs">Anchor Name<b>*</b></div>
  <div id="dlginput" class="abs"></div>
  <div id="dlginputtext" class="abs">Test test</div>
  <div id="dlghr2" class="abs"></div>
  <div id="ok" class="abs">OK</div>
  <div id="cancel" class="abs">Cancel</div>
  <div id="resize" class="abs"></div>
  <svg style="left:442.3px;top:22px" width="16" height="15.500" viewBox="0 0 16 15.500" fill="none" stroke="#c8c6c2" stroke-width="3.400"><path d="M1.300 1.300l13.400 12.900M14.700 1.300L1.300 14.200"/></svg>
</div>
</div>
</body>
</html>
